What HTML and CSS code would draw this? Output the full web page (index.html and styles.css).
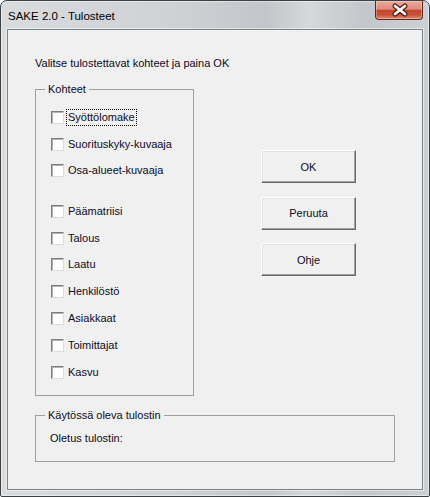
FILE: index.html
```html
<!DOCTYPE html>
<html lang="fi">
<head>
    <meta charset="UTF-8">
    <meta name="viewport" content="width=device-width, initial-scale=1.0">
    <title>SAKE 2.0 - Tulosteet</title>
    <link rel="stylesheet" href="styles.css">
</head>
<body>
    <div class="window">
        <div class="titlebar">
            <span class="title">SAKE 2.0 - Tulosteet</span>
            <div class="close">
                <svg width="48" height="18" viewBox="0 0 48 18">
                    <path d="M19 5 L29 13 M29 5 L19 13" stroke="#4a1a14" stroke-width="5" stroke-linecap="round"/>
                    <path d="M19 5 L29 13 M29 5 L19 13" stroke="#ffffff" stroke-width="2.6" stroke-linecap="round"/>
                </svg>
            </div>
        </div>

        <div class="client">
            <p class="intro">Valitse tulostettavat kohteet ja paina OK</p>

            <div class="main-row">
                <div class="group targets">
                    <span class="legend">Kohteet</span>
                    <div class="items">
                        <div class="row"><span class="check"></span><span class="label focus">Syöttölomake</span></div>
                        <div class="row"><span class="check"></span><span class="label">Suorituskyky-kuvaaja</span></div>
                        <div class="row"><span class="check"></span><span class="label">Osa-alueet-kuvaaja</span></div>
                        <div class="row sep"><span class="check"></span><span class="label">Päämatriisi</span></div>
                        <div class="row"><span class="check"></span><span class="label">Talous</span></div>
                        <div class="row"><span class="check"></span><span class="label">Laatu</span></div>
                        <div class="row"><span class="check"></span><span class="label">Henkilöstö</span></div>
                        <div class="row"><span class="check"></span><span class="label">Asiakkaat</span></div>
                        <div class="row"><span class="check"></span><span class="label">Toimittajat</span></div>
                        <div class="row"><span class="check"></span><span class="label">Kasvu</span></div>
                    </div>
                </div>

                <div class="buttons">
                    <button>OK</button>
                    <button>Peruuta</button>
                    <button>Ohje</button>
                </div>
            </div>

            <div class="group printer">
                <span class="legend">Käytössä oleva tulostin</span>
                <p class="printer-name">Oletus tulostin:</p>
            </div>
        </div>
    </div>
</body>
</html>
```

FILE: styles.css
```css
* {
    margin: 0;
    padding: 0;
    box-sizing: border-box;
    font-family: "Liberation Sans", Arial, sans-serif;
}

body {
    background: #ffffff;
}

.window {
    width: 430px;
    height: 497px;
    border: 1px solid #3c4146;
    border-radius: 7px 7px 2px 2px;
    padding: 0 6px 6px 6px;
    background: linear-gradient(to right, #d9dbdd 0%, #cfd2d5 40%, #c2c6ca 62%, #d6d8da 72%, #c3c7cb 85%, #cdd0d3 100%);
    box-shadow: inset 0 0 0 1px rgba(255, 255, 255, 0.45);
}

.titlebar {
    height: 28px;
    display: flex;
    align-items: flex-start;
}

.title {
    font-size: 11.5px;
    color: #000;
    padding: 8px 0 0 1px;
    line-height: 14px;
}

.close {
    margin-left: auto;
    width: 48px;
    height: 19px;
    border: 1px solid #5e2820;
    border-top: none;
    border-radius: 0 0 4px 4px;
    background: linear-gradient(#eaa99a 0%, #de8d7b 45%, #c4462d 52%, #c9513a 78%, #e28d6f 100%);
    box-shadow: inset 0 0 0 1px rgba(255, 255, 255, 0.3);
}

.close svg {
    display: block;
}

.client {
    height: 461px;
    border: 1px solid #7d8287;
    background: #f0f0f0;
    padding: 27px 0 0 27px;
    color: #0c0c1e;
    font-size: 11px;
    box-shadow: 0 0 0 1px rgba(255, 255, 255, 0.5);
}

.intro {
    line-height: 13px;
}

.main-row {
    display: flex;
    align-items: flex-start;
    margin-top: 19px;
}

.group {
    border: 1px solid #a0a0a0;
}

.legend {
    display: table;
    line-height: 13px;
    margin: -7px 0 -6px 9px;
    padding: 0 3px;
    background: #f0f0f0;
}

.targets {
    width: 159px;
    height: 307px;
}

.items {
    display: flex;
    flex-direction: column;
    gap: 9.8px;
    padding: 18.8px 0 0 15px;
}

.row {
    display: flex;
    align-items: center;
    height: 17px;
}

.row.sep {
    margin-top: 13.6px;
}

.check {
    width: 13px;
    height: 13px;
    background: #ffffff;
    border: 1px solid;
    border-color: #7c7c7c #dcdcdc #dcdcdc #7c7c7c;
    box-shadow: inset 1px 1px #b4b4b4;
}

.label {
    margin-left: 2px;
    padding: 0 1px;
    line-height: 15px;
    border: 1px dotted transparent;
}

.label.focus {
    border-color: #000;
}

.buttons {
    display: flex;
    flex-direction: column;
    gap: 13.5px;
    margin: 61px 0 0 67px;
}

.buttons button {
    width: 95px;
    height: 33px;
    font-size: 11px;
    color: #0c0c1e;
    background: #f0f0f0;
    border: 1px solid;
    border-color: #ffffff #696969 #696969 #ffffff;
    box-shadow: inset -1px -1px #a0a0a0, inset 1px 1px #e3e3e3;
}

.printer {
    width: 360px;
    height: 47px;
    margin-top: 19px;
}

.printer-name {
    line-height: 13px;
    padding: 15.5px 0 0 14px;
}
```
